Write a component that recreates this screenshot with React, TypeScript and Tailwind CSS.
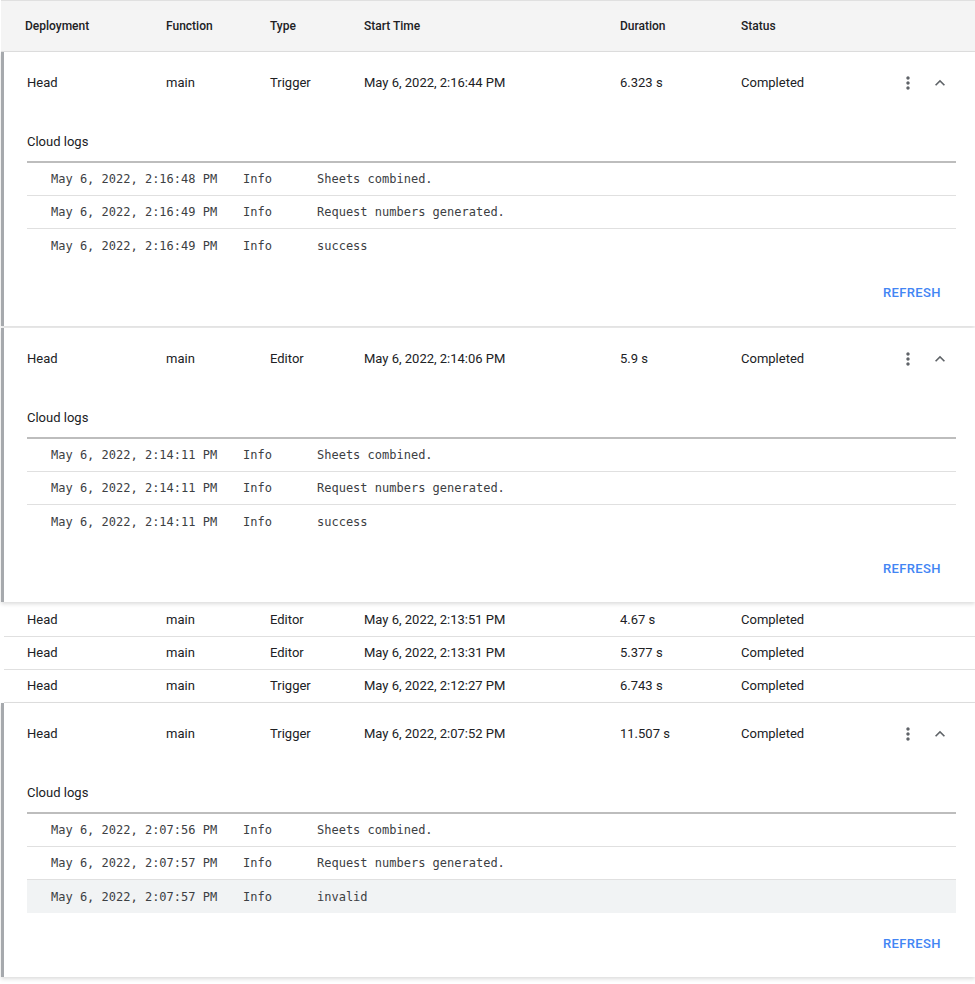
const sans = { fontFamily: "Roboto, 'Noto Sans', Arial, sans-serif" };

type Log = { time: string; level: string; msg: string; hl?: boolean };
type Exec = {
  fn: string;
  type: string;
  start: string;
  duration: string;
  logs?: Log[];
};

const execs: Exec[] = [
  {
    fn: "main",
    type: "Trigger",
    start: "May 6, 2022, 2:16:44 PM",
    duration: "6.323 s",
    logs: [
      { time: "May 6, 2022, 2:16:48 PM", level: "Info", msg: "Sheets combined." },
      { time: "May 6, 2022, 2:16:49 PM", level: "Info", msg: "Request numbers generated." },
      { time: "May 6, 2022, 2:16:49 PM", level: "Info", msg: "success" },
    ],
  },
  {
    fn: "main",
    type: "Editor",
    start: "May 6, 2022, 2:14:06 PM",
    duration: "5.9 s",
    logs: [
      { time: "May 6, 2022, 2:14:11 PM", level: "Info", msg: "Sheets combined." },
      { time: "May 6, 2022, 2:14:11 PM", level: "Info", msg: "Request numbers generated." },
      { time: "May 6, 2022, 2:14:11 PM", level: "Info", msg: "success" },
    ],
  },
  { fn: "main", type: "Editor", start: "May 6, 2022, 2:13:51 PM", duration: "4.67 s" },
  { fn: "main", type: "Editor", start: "May 6, 2022, 2:13:31 PM", duration: "5.377 s" },
  { fn: "main", type: "Trigger", start: "May 6, 2022, 2:12:27 PM", duration: "6.743 s" },
  {
    fn: "main",
    type: "Trigger",
    start: "May 6, 2022, 2:07:52 PM",
    duration: "11.507 s",
    logs: [
      { time: "May 6, 2022, 2:07:56 PM", level: "Info", msg: "Sheets combined." },
      { time: "May 6, 2022, 2:07:57 PM", level: "Info", msg: "Request numbers generated." },
      { time: "May 6, 2022, 2:07:57 PM", level: "Info", msg: "invalid", hl: true },
    ],
  },
];

function MoreVert() {
  return (
    <svg width="20" height="20" viewBox="0 0 24 24" fill="#5f6368">
      <path d="M12 8c1.1 0 2-.9 2-2s-.9-2-2-2-2 .9-2 2 .9 2 2 2zm0 2c-1.1 0-2 .9-2 2s.9 2 2 2 2-.9 2-2-.9-2-2-2zm0 6c-1.1 0-2 .9-2 2s.9 2 2 2 2-.9 2-2-.9-2-2-2z" />
    </svg>
  );
}

function ExpandLess() {
  return (
    <svg width="20" height="20" viewBox="0 0 24 24" fill="#5f6368">
      <path d="M7.41 15.41L12 10.83l4.59 4.58L18 14l-6-6-6 6z" />
    </svg>
  );
}

function Cells({ e }: { e: Exec }) {
  return (
    <>
      <div className="w-[139px]">Head</div>
      <div className="w-[104px]">{e.fn}</div>
      <div className="w-[94px]">{e.type}</div>
      <div className="w-[256px]">{e.start}</div>
      <div className="w-[121px]">{e.duration}</div>
      <div className="w-[150px]">Completed</div>
    </>
  );
}

function ExpandedCard({ e }: { e: Exec }) {
  return (
    <div className="mb-[2px] border-l-[3px] border-[#a6a9ad] bg-white shadow-[0_2px_4px_rgba(0,0,0,0.14)] relative">
      <div className="flex h-[62px] items-center pl-[23px] text-[13px] text-[#202124]">
        <Cells e={e} />
        <div className="ml-auto flex items-center gap-[12px] pr-[25px]">
          <MoreVert />
          <ExpandLess />
        </div>
      </div>
      <div className="pl-[23px] pr-[19px]">
        <div className="pt-[18px] pb-[9px] text-[13px] leading-[20px] text-[#202124]">Cloud logs</div>
        <div className="border-t-2 border-[#bdbdbd]">
          {e.logs!.map((l, i) => (
            <div
              key={i}
              className={`flex h-[33px] items-center pl-[24px] text-[12px] text-[#3c4043] ${
                i < e.logs!.length - 1 ? "border-b border-[#e0e0e0]" : ""
              } ${l.hl ? "bg-[#f1f3f4]" : ""}`}
              style={{ fontFamily: "'DejaVu Sans Mono', 'Liberation Mono', monospace" }}
            >
              <div className="w-[192px]">{l.time}</div>
              <div className="w-[74px]">{l.level}</div>
              <div>{l.msg}</div>
            </div>
          ))}
        </div>
        <div className="flex justify-end pt-[13px] pb-[15px]">
          <button className="h-[36px] px-[15px] text-[13px] font-medium tracking-[0.4px] text-[#4285f4]">
            REFRESH
          </button>
        </div>
      </div>
    </div>
  );
}

function CollapsedRow({ e, first }: { e: Exec; first: boolean }) {
  return (
    <div
      className={`ml-[3px] flex h-[33px] items-center border-b border-[#e0e0e0] pl-[23px] text-[13px] text-[#202124] ${
        first ? "mt-px" : ""
      }`}
    >
      <Cells e={e} />
    </div>
  );
}

export default function App() {
  return (
    <div className="min-h-[984px] w-[975px] bg-white pl-px" style={sans}>
      <div className="flex h-[52px] items-center border-t border-b border-[#e0e0e0] bg-[#f4f4f4] pl-[24px] text-[12px] font-medium text-[#202124]">
        <div className="w-[141px]">Deployment</div>
        <div className="w-[104px]">Function</div>
        <div className="w-[94px]">Type</div>
        <div className="w-[256px]">Start Time</div>
        <div className="w-[121px]">Duration</div>
        <div>Status</div>
      </div>
      {execs.map((e, i) =>
        e.logs ? (
          <ExpandedCard key={i} e={e} />
        ) : (
          <CollapsedRow key={i} e={e} first={!!execs[i - 1]?.logs} />
        )
      )}
    </div>
  );
}
